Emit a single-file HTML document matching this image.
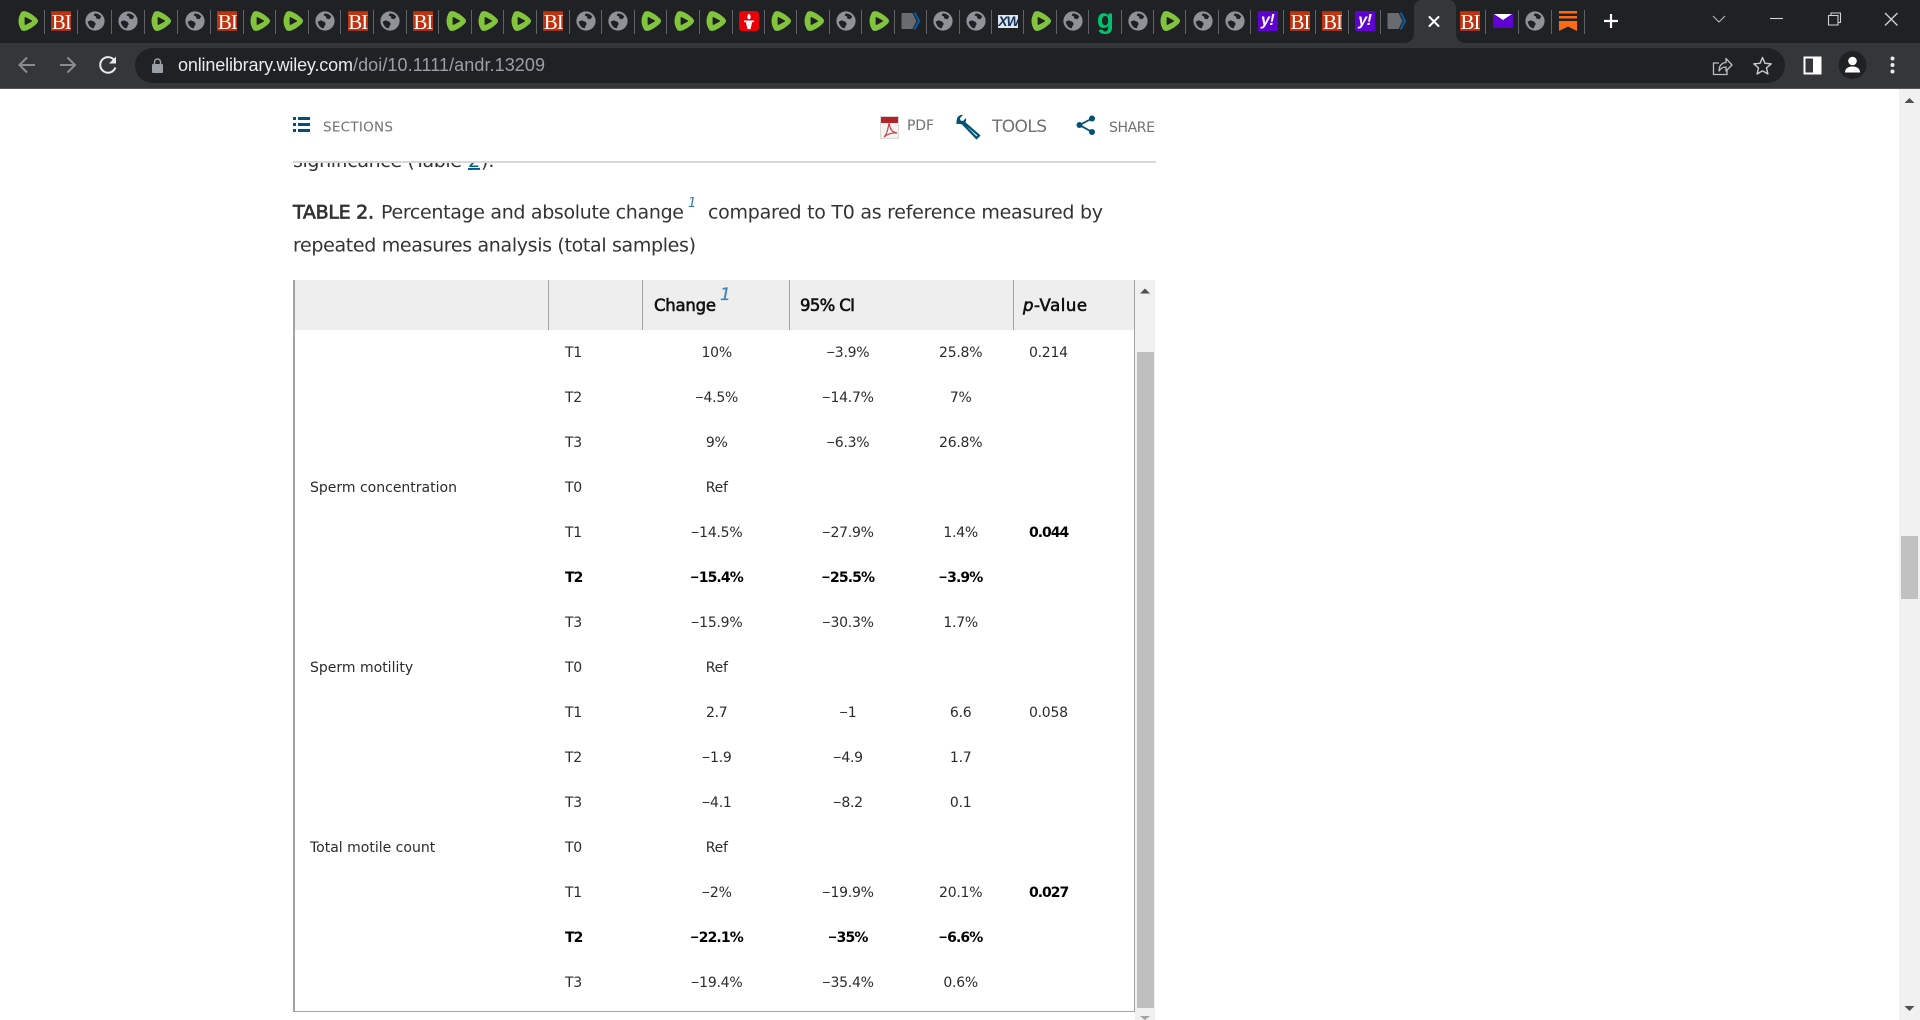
<!DOCTYPE html>
<html lang="en"><head><meta charset="utf-8"><title>Table 2</title>
<style>
html,body{margin:0;padding:0;width:1920px;height:1020px;overflow:hidden;background:#fff}
body{position:relative;font-family:"DejaVu Sans","Liberation Sans",sans-serif;color:#333}
.a{position:absolute}
#strip{left:0;top:0;width:1920px;height:43px;background:#202124}
#bar{left:0;top:43px;width:1920px;height:45px;background:#35363a}
#line{left:0;top:88px;width:1920px;height:1px;background:#55565a}
#omni{left:135px;top:48px;width:1650px;height:35px;border-radius:18px;background:#202124}
#tabs{left:11.5px;top:0;height:43px;display:flex}
.c{width:32.43px;height:43px;position:relative;flex:none}
.c:nth-child(-n+22){width:32.6px}
.c:nth-child(-n+5){width:33.4px}
.c>*{position:absolute;left:6.31px;top:11px;width:20px;height:20px}
.c i{left:auto;right:0;top:9.5px;width:1px;height:24.5px;background:#5f6368}
.bi{background:#c1330f;color:#fff;font:21px/21px "Liberation Serif",serif;letter-spacing:-1px;text-align:center;border-top:1px solid #a32a0c;border-bottom:1px solid #a32a0c;box-sizing:border-box;overflow:hidden}
.ya{background:#5f01d1;color:#fff;font:italic bold 16px/20px "Liberation Sans",sans-serif;text-align:center;letter-spacing:-.5px}
.sep{width:1px;height:24.5px;top:9.5px;background:#5f6368}
table{position:absolute;left:295px;top:330px;border-collapse:collapse;table-layout:fixed;width:839px;font-size:14px;color:#2b2b2b}
td{height:45px;padding:0;text-align:center;white-space:nowrap;letter-spacing:-.25px}
td:nth-child(1){text-align:left;padding-left:15px;letter-spacing:0}
td:nth-child(2){text-align:left}
td:nth-child(6){text-align:left;padding-left:12.2px}
tr.b td:nth-child(n+2){font-weight:bold;color:#000;letter-spacing:-.9px}
td.b{font-weight:bold;color:#000;letter-spacing:-1px}
u{text-decoration:none;font-family:"Liberation Sans",sans-serif;letter-spacing:0}
</style></head><body>
<svg width="0" height="0" style="position:absolute"><defs>
<symbol id="p" viewBox="0 0 20 20"><path fill="#82c53c" d="M3 1.5C1.5 4 .5 7 .5 10c0 3 1 6 2.500 8.500C4 20 6 20.200 8 19.600c4-1.600 8-4.100 10.800-7.100 1.600-1.500 1.600-3.500 0-5C16 4.500 12 2 8 .4 6-.2 4 0 3 1.500z"/><path fill="#202124" stroke="#202124" stroke-width="1.4" stroke-linejoin="round" d="M7.3 6.8l6 3.200-6 3.200z"/></symbol>
<symbol id="g" viewBox="0 0 20 20"><circle cx="10" cy="10" r="9.6" fill="#8f9399"/><path fill="#202124" d="M9.500 2.600c2.800-.3 5.200.9 6.700 3l-1.700 2.600-3-.6-.8-2.300-2-.6z"/><path fill="#202124" d="M2.700 10.800l3.100-1.500 3.700 1.600 1.300 2.100-1.400 2.200-.5 2.100-1.300 0c-2.700-1-4.400-3.400-4.900-6.500z"/></symbol>
<symbol id="s" viewBox="0 0 20 20"><path fill="#6a6b70" d="M1.500 2h10l4 8-4 8h-10a1 1 0 0 1-1-1V3a1 1 0 0 1 1-1z"/><path fill="none" stroke="#0a5a9f" stroke-width="2.200" d="M13.500 1.500l4.500 8.500-4.500 8.500"/></symbol>
<symbol id="t" viewBox="0 0 20 20"><rect width="20" height="20" rx="3" fill="#ea0008"/><path fill="#fff" d="M10 2.500c1.500 1.800 2 3.200 1.500 4.500-.3.900-1 1.300-1.500 1.300S8.800 7.900 8.500 7C8 5.700 8.500 4.300 10 2.500zM5 9.500h10v1.600h-1.800l-1.700 7h-3l-1.700-7H5z"/></symbol>
</defs></svg>

<div class="a" id="strip"></div>
<div class="a" id="bar"></div>
<div class="a" id="line"></div>
<div class="a" id="omni"></div>

<div class="a" id="tabs">
<div class="c"><svg><use href="#p"/></svg><i></i></div>
<div class="c"><div class="bi">BI</div><i></i></div>
<div class="c"><svg><use href="#g"/></svg><i></i></div>
<div class="c"><svg><use href="#g"/></svg><i></i></div>
<div class="c"><svg><use href="#p"/></svg><i></i></div>
<div class="c"><svg><use href="#g"/></svg><i></i></div>
<div class="c"><div class="bi">BI</div><i></i></div>
<div class="c"><svg><use href="#p"/></svg><i></i></div>
<div class="c"><svg><use href="#p"/></svg><i></i></div>
<div class="c"><svg><use href="#g"/></svg><i></i></div>
<div class="c"><div class="bi">BI</div><i></i></div>
<div class="c"><svg><use href="#g"/></svg><i></i></div>
<div class="c"><div class="bi">BI</div><i></i></div>
<div class="c"><svg><use href="#p"/></svg><i></i></div>
<div class="c"><svg><use href="#p"/></svg><i></i></div>
<div class="c"><svg><use href="#p"/></svg><i></i></div>
<div class="c"><div class="bi">BI</div><i></i></div>
<div class="c"><svg><use href="#g"/></svg><i></i></div>
<div class="c"><svg><use href="#g"/></svg><i></i></div>
<div class="c"><svg><use href="#p"/></svg><i></i></div>
<div class="c"><svg><use href="#p"/></svg><i></i></div>
<div class="c"><svg><use href="#p"/></svg><i></i></div>
<div class="c"><svg><use href="#t"/></svg><i></i></div>
<div class="c"><svg><use href="#p"/></svg><i></i></div>
<div class="c"><svg><use href="#p"/></svg><i></i></div>
<div class="c"><svg><use href="#g"/></svg><i></i></div>
<div class="c"><svg><use href="#p"/></svg><i></i></div>
<div class="c"><svg><use href="#s"/></svg><i></i></div>
<div class="c"><svg><use href="#g"/></svg><i></i></div>
<div class="c"><svg><use href="#g"/></svg><i></i></div>
<div class="c"><div style="top:15px;height:13px;background:#dfe6ee;color:#12345a;font:italic bold 14px/13px 'Liberation Sans',sans-serif;text-align:center;letter-spacing:-1px;overflow:hidden">XW</div><i></i></div>
<div class="c"><svg><use href="#p"/></svg><i></i></div>
<div class="c"><svg><use href="#g"/></svg><i></i></div>
<div class="c"><div style="top:6px;height:26px;color:#00c36f;font:bold 28px/26px 'Liberation Sans',sans-serif;text-align:center">g</div><i></i></div>
<div class="c"><svg><use href="#g"/></svg><i></i></div>
<div class="c"><svg><use href="#p"/></svg><i></i></div>
<div class="c"><svg><use href="#g"/></svg><i></i></div>
<div class="c"><svg><use href="#g"/></svg><i></i></div>
<div class="c"><div class="ya">y!</div><i></i></div>
<div class="c"><div class="bi">BI</div><i></i></div>
<div class="c"><div class="bi">BI</div><i></i></div>
<div class="c"><div class="ya">y!</div><i></i></div>
<div class="c"><svg><use href="#s"/></svg></div>
</div>

<svg class="a" style="left:1404px;top:0" width="62" height="44" viewBox="0 0 62 44"><path fill="#35363a" d="M0 43c5 0 10-3 10-9V8c0-5 3-8 8-8h26c5 0 8 3 8 8v26c0 6 5 9 10 9v1H0z"/><path stroke="#fff" stroke-width="2" stroke-linecap="round" d="M25.500 17l9 9M34.500 17l-9 9"/></svg>

<div class="a bi" style="left:1460px;top:11px;width:20px;height:20px">BI</div>
<div class="a sep" style="left:1485px"></div>
<svg class="a" style="left:1493px;top:14px" width="20" height="14"><rect width="20" height="14" fill="#5f01d1"/><path fill="#fff" d="M1 0h18l-9 6z"/></svg>
<div class="a sep" style="left:1518px"></div>
<svg class="a" style="left:1525px;top:11px" width="20" height="20"><use href="#g"/></svg>
<div class="a sep" style="left:1551px"></div>
<svg class="a" style="left:1559px;top:11px" width="18" height="20"><path fill="#ff6a14" d="M0 0h18v2.500H0zM0 5h18v2.500H0zM0 10h18v10l-9-4.500L0 20z"/></svg>
<div class="a sep" style="left:1584px"></div>
<svg class="a" style="left:1603px;top:13px" width="16" height="16"><path stroke="#fff" stroke-width="2.200" d="M8 1v14M1 8h14"/></svg>

<svg class="a" style="left:1700px;top:0" width="220" height="44" fill="none" stroke="#d0d2d5" stroke-width="1.100">
<path stroke="#b8babd" d="M13 16l6 6 6-6"/>
<path d="M70 18.500h13"/>
<path d="M128.500 15.500h9.500v9.500h-9.500zM131 15.500v-2.500h9.500v9.500H138"/>
<path stroke-width="1.300" d="M185 13l12.500 12.500M197.500 13L185 25.500"/>
</svg>

<svg class="a" style="left:0;top:43px" width="1920" height="45" fill="none">
<g stroke="#8a8c8f" stroke-width="2"><path d="M35 22H20M27 14.500L19.500 22l7.500 7.500"/><path d="M60 22h15M67.500 14.500L75 22l-7.500 7.500"/></g>
<path stroke="#e8eaed" stroke-width="2" d="M114.800 18a7.800 7.800 0 1 0 .6 6.500"/><path fill="#e8eaed" d="M116 13.500v7h-7z"/>
<path fill="#9aa0a6" d="M153 21h9a1 1 0 0 1 1 1v7a1 1 0 0 1-1 1h-9a1 1 0 0 1-1-1v-7a1 1 0 0 1 1-1z"/><path stroke="#9aa0a6" stroke-width="1.500" d="M154.500 21v-2a3 3 0 0 1 6 0v2"/>
<g stroke="#bcbec1" stroke-width="1.300" transform="translate(-3 0)"><path d="M1722 20h-5.500v11.500h13.500V27"/><path stroke-linejoin="round" d="M1722 28c0-6 3-8 7-8.500V15.500l6 6.500-6 6V24c-3 0-5 1-7 4z"/></g>
<path stroke="#c9cbce" stroke-width="1.400" stroke-linejoin="round" d="M1762.500 14.500l2.500 5.800 6.200.5-4.700 4.100 1.400 6.100-5.400-3.200-5.400 3.200 1.400-6.100-4.700-4.100 6.200-.5z"/>
<rect x="1804.500" y="14.500" width="16" height="16" stroke="#fff" stroke-width="2"/><rect x="1813" y="14" width="7" height="17" fill="#fff"/>
<circle cx="1852.500" cy="22" r="14" fill="#202124"/><circle cx="1852.500" cy="18" r="4.300" fill="#fff"/><path fill="#fff" d="M1845 29.500c0-4 3-6 7.500-6s7.500 2 7.500 6z"/>
<g fill="#e8eaed"><circle cx="1892.500" cy="15.500" r="2"/><circle cx="1892.500" cy="22" r="2"/><circle cx="1892.500" cy="28.500" r="2"/></g>
</svg>

<!-- body text behind sticky header -->
<svg class="a" style="left:0;top:0" width="1920" height="1020">
<g font-size="19" fill="#333">
<text x="293" y="167" textLength="169" lengthAdjust="spacing">significance (Table</text>
<text x="468" y="167" fill="#005a8c" text-decoration="underline">2</text>
<text x="481" y="167">).</text>
</g>
</svg>
<div class="a" style="left:0;top:89px;width:1899px;height:72px;background:#fff"></div>
<div class="a" style="left:293px;top:161px;width:863px;height:2px;background:#d8d8d8"></div>

<svg class="a" style="left:0;top:0" width="1920" height="1020">
<text x="178" y="71" font-family="Liberation Sans,sans-serif" font-size="18" fill="#e8eaed" textLength="175" lengthAdjust="spacing">onlinelibrary.wiley.com</text>
<text x="353" y="71" font-family="Liberation Sans,sans-serif" font-size="18" fill="#9aa0a6" textLength="192" lengthAdjust="spacing">/doi/10.1111/andr.13209</text>

<g fill="#005274"><rect x="293" y="117" width="3" height="3"/><rect x="293" y="123" width="3" height="3"/><rect x="293" y="129" width="3" height="3"/><rect x="298" y="117" width="12" height="3"/><rect x="298" y="123" width="12" height="3"/><rect x="298" y="129" width="12" height="3"/></g>
<text x="323" y="131.500" font-size="13.500" fill="#707070" textLength="70" lengthAdjust="spacing">SECTIONS</text>

<rect x="880.500" y="116.500" width="18" height="22" fill="#f4f2f2" stroke="#d9d6d6"/><rect x="881" y="117" width="17" height="6" fill="#b5232a"/><path fill="none" stroke="#c2474c" stroke-width="1.200" d="M889 123c1 5 2 9 8 10-4-.5-8 0-13 4 3-3 4-8 5-14z"/>
<text x="907" y="130" font-size="14" fill="#707070" textLength="27" lengthAdjust="spacing">PDF</text>

<path fill="#005274" d="M957 118.500c1-2.500 3.500-4 6-3.500l-3 3 .5 2.500 2.500.5 3-3c.5 2.500-.5 5-3 6l-.8.2-6-.5z"/><path fill="none" stroke="#005274" stroke-width="2.200" d="M963.500 122l15.500 13.500-2.500 2.500-14.500-15"/>
<text x="992" y="132" font-size="17" fill="#707070" textLength="55" lengthAdjust="spacing">TOOLS</text>

<g fill="#005274"><circle cx="1079.500" cy="125" r="3"/><circle cx="1092" cy="118.500" r="3"/><circle cx="1092" cy="132" r="3"/></g><path fill="none" stroke="#005274" stroke-width="1.800" d="M1092 118.500l-12.500 6.500 12.500 7"/>
<text x="1109" y="132" font-size="14" fill="#707070" textLength="46" lengthAdjust="spacing">SHARE</text>

<g font-size="19" fill="#333">
<text x="293" y="218.500" stroke="#333" stroke-width=".7" textLength="81" lengthAdjust="spacing">TABLE 2.</text>
<text x="381" y="218.500" textLength="303" lengthAdjust="spacing">Percentage and absolute change</text>
<text x="708" y="218.500" textLength="395" lengthAdjust="spacing">compared to T0 as reference measured by</text>
<text x="293" y="251.500" textLength="403" lengthAdjust="spacing">repeated measures analysis (total samples)</text>
</g>
<text x="688" y="207" font-size="13" font-style="italic" fill="#2e79ad">1</text>
</svg>

<!-- table frame -->
<div class="a" style="left:295px;top:280px;width:839px;height:50px;background:#eee"></div>
<div class="a" style="left:293px;top:280px;width:2px;height:731px;background:#a3a3a3"></div>
<div class="a" style="left:293px;top:1011px;width:842px;height:1px;background:#a3a3a3"></div>
<div class="a" style="left:548px;top:280px;width:1px;height:50px;background:#a3a3a3"></div>
<div class="a" style="left:642px;top:280px;width:1px;height:50px;background:#a3a3a3"></div>
<div class="a" style="left:789px;top:280px;width:1px;height:50px;background:#a3a3a3"></div>
<div class="a" style="left:1013px;top:280px;width:1px;height:50px;background:#a3a3a3"></div>
<div class="a" style="left:1134px;top:280px;width:1px;height:732px;background:#a3a3a3"></div>

<svg class="a" style="left:0;top:0" width="1920" height="1020">
<g font-size="16.500" fill="#111" stroke="#111" stroke-width=".6">
<text x="654" y="311" textLength="62" lengthAdjust="spacing">Change</text>
<text x="800" y="311" textLength="55" lengthAdjust="spacing">95% CI</text>
<text x="1023" y="311" textLength="64" lengthAdjust="spacing"><tspan font-style="italic">p</tspan>-Value</text>
</g>
<text x="720" y="300" font-size="17" font-style="italic" fill="#3f84b5" stroke="#3f84b5" stroke-width=".3">1</text>
</svg>

<table>
<colgroup><col style="width:270px"><col style="width:77px"><col style="width:149.4px"><col style="width:113.2px"><col style="width:112.2px"><col style="width:117.2px"></colgroup>
<tr><td></td><td>T1</td><td>10%</td><td><u>−</u>3.9%</td><td>25.8%</td><td>0.214</td></tr>
<tr><td></td><td>T2</td><td><u>−</u>4.5%</td><td><u>−</u>14.7%</td><td>7%</td><td></td></tr>
<tr><td></td><td>T3</td><td>9%</td><td><u>−</u>6.3%</td><td>26.8%</td><td></td></tr>
<tr><td>Sperm concentration</td><td>T0</td><td>Ref</td><td></td><td></td><td></td></tr>
<tr><td></td><td>T1</td><td><u>−</u>14.5%</td><td><u>−</u>27.9%</td><td>1.4%</td><td class="b">0.044</td></tr>
<tr class="b"><td></td><td>T2</td><td><u>−</u>15.4%</td><td><u>−</u>25.5%</td><td><u>−</u>3.9%</td><td></td></tr>
<tr><td></td><td>T3</td><td><u>−</u>15.9%</td><td><u>−</u>30.3%</td><td>1.7%</td><td></td></tr>
<tr><td>Sperm motility</td><td>T0</td><td>Ref</td><td></td><td></td><td></td></tr>
<tr><td></td><td>T1</td><td>2.7</td><td><u>−</u>1</td><td>6.6</td><td>0.058</td></tr>
<tr><td></td><td>T2</td><td><u>−</u>1.9</td><td><u>−</u>4.9</td><td>1.7</td><td></td></tr>
<tr><td></td><td>T3</td><td><u>−</u>4.1</td><td><u>−</u>8.2</td><td>0.1</td><td></td></tr>
<tr><td>Total motile count</td><td>T0</td><td>Ref</td><td></td><td></td><td></td></tr>
<tr><td></td><td>T1</td><td><u>−</u>2%</td><td><u>−</u>19.9%</td><td>20.1%</td><td class="b">0.027</td></tr>
<tr class="b"><td></td><td>T2</td><td><u>−</u>22.1%</td><td><u>−</u>35%</td><td><u>−</u>6.6%</td><td></td></tr>
<tr><td></td><td>T3</td><td><u>−</u>19.4%</td><td><u>−</u>35.4%</td><td>0.6%</td><td></td></tr>
</table>

<!-- inner scrollbar -->
<div class="a" style="left:1135px;top:280px;width:20px;height:740px;background:#f0f0f0"></div>
<div class="a" style="left:1137px;top:352px;width:17px;height:656px;background:#bfbfbf"></div>
<svg class="a" style="left:1135px;top:280px" width="20" height="740"><path fill="#505050" d="M10 8.500l5 5H5z"/><path fill="#a3a3a3" d="M5 736h10l-5 4z"/></svg>

<!-- window scrollbar -->
<div class="a" style="left:1899px;top:89px;width:21px;height:931px;background:#f1f1f1"></div>
<div class="a" style="left:1901px;top:536px;width:17px;height:63px;background:#c1c1c1"></div>
<svg class="a" style="left:1899px;top:89px" width="21" height="931"><path fill="#505050" d="M10.500 9l5 5h-10z"/><path fill="#505050" d="M5.500 917h10l-5 5z"/></svg>
</body></html>
